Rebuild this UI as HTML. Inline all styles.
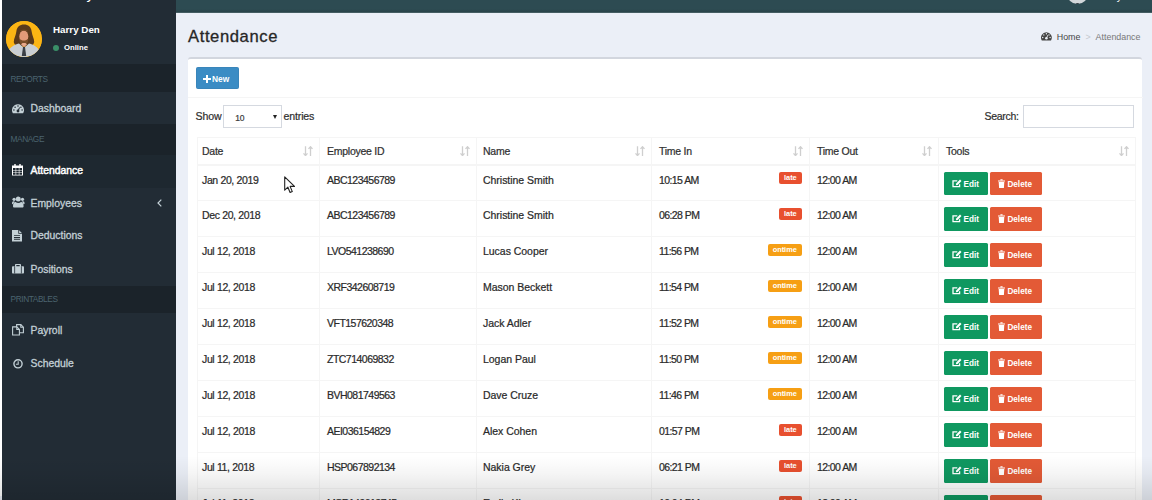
<!DOCTYPE html>
<html lang="en">
<head>
<meta charset="utf-8">
<title>Attendance</title>
<style>
*{box-sizing:border-box;margin:0;padding:0}
html,body{width:1152px;height:500px;overflow:hidden;background:#fff}
body{font-family:"Liberation Sans",sans-serif;font-size:10px;color:#333;position:relative}
#app{position:absolute;left:0;top:0;width:1152px;height:500px;overflow:hidden;background:#ebeff7}
svg{display:block}

/* ---------- sidebar ---------- */
.edge{position:absolute;left:0;top:0;width:2px;height:496px;background:#fff}
.sidebar{position:absolute;left:2px;top:0;width:174px;height:500px;background:#222c35;overflow:hidden}
.logo{position:absolute;left:0;top:-13.6px;width:174px;height:16px;color:#fff;font-size:15px;line-height:16px;text-align:center;white-space:nowrap;padding-right:29px}
.logo b{position:relative;top:-4px}
.user{position:absolute;left:0;top:12px;width:174px;height:52px}
.avatar{position:absolute;left:4px;top:9px;width:36px;height:36px;border-radius:50%;overflow:hidden;background:#fbb117}
.uname{position:absolute;left:51px;top:12px;color:#fff;font-weight:700;font-size:9.8px;line-height:12px;white-space:nowrap}
.ustat{position:absolute;left:51px;top:31px;color:#fff;font-size:7.7px;line-height:10px;white-space:nowrap;font-weight:700}
.ustat i{display:inline-block;width:6px;height:6px;border-radius:50%;background:#3a8f68;margin-right:5px;vertical-align:-.5px}
.menu{position:absolute;left:0;top:0;width:174px;list-style:none}
.menu li{position:absolute;left:0;width:174px;display:block;white-space:nowrap}
.menu li.hd{background:#1b232a;color:#4b646f;font-size:8.3px;letter-spacing:-.4px;padding-left:8.5px}
.menu li.it{color:#c3d0d6;font-size:10.4px;font-weight:400;-webkit-text-stroke:.3px #c3d0d6;padding-left:28.5px}
.menu li.it.on{background:#1e2830;color:#fff;-webkit-text-stroke:.45px #fff}
.menu li.it svg{position:absolute}


/* ---------- top bar ---------- */
.topbar{position:absolute;left:176px;top:0;width:976px;height:13px;background:linear-gradient(#2d4b52 0,#2d4b52 9px,#294349 12px,#5f777b 13px)}

/* ---------- content ---------- */
.title{position:absolute;left:188px;top:25.5px;font-size:16.6px;letter-spacing:.6px;line-height:22px;color:#262626;-webkit-text-stroke:.3px #262626;white-space:nowrap}
.crumb{position:absolute;right:11.5px;top:31px;font-size:8.9px;line-height:12px;white-space:nowrap;color:#777}
.crumb b{font-weight:400;color:#444}
.crumb em{font-style:normal;color:#c5c9cf;padding:0 5px}
.box{position:absolute;left:187.5px;top:57px;width:954.5px;height:460px;background:#fff;border-top:2px solid #d2d6de;border-radius:3px 3px 0 0}

.bhead{position:absolute;left:0;top:0;width:955px;height:38.5px;border-bottom:1px solid #f5f5f5}
.btn{display:inline-block;color:#fff;font-weight:700;white-space:nowrap;border-radius:1.5px;vertical-align:top}
.btn svg{display:inline-block}
.btn.new{position:absolute;left:8px;top:7.5px;width:43.5px;height:22.5px;background:#3b8cc4;border:1px solid #3985ba;font-size:8.4px;line-height:22px;padding-left:6.5px;border-radius:1.5px}
.btn.new svg{vertical-align:-1px;margin-right:1px}
.ctl{position:absolute;left:0;top:38px;width:955px;height:40px}
.len{position:absolute;left:8px;top:8.3px;font-size:10.6px;letter-spacing:-.15px;line-height:22px;color:#2e2e2e;white-space:nowrap;-webkit-text-stroke:.2px #2e2e2e}
.sel{display:inline-block;position:relative;width:58.5px;height:23.5px;border:1px solid #d5d9e0;vertical-align:top;margin:-.8px -1px 0 -1px;font-size:8.5px;line-height:24px;padding-left:11px;color:#444}
.sel i{position:absolute;right:4.2px;top:9.5px;border:2.9px solid transparent;border-top:4.8px solid #222;border-bottom:0}
.flt{position:absolute;right:8.8px;top:7.7px;font-size:10.5px;letter-spacing:-.28px;line-height:22px;color:#2e2e2e;white-space:nowrap;-webkit-text-stroke:.2px #2e2e2e}
.inp{display:inline-block;width:110.5px;height:23.5px;border:1px solid #d5d9e0;vertical-align:top;margin:-.2px 0 0 4.5px;background:#fff}
.tbl{position:absolute;left:9px;top:78px;width:939px;border-collapse:collapse;table-layout:fixed;font-size:10.5px;color:#2a2a2a;-webkit-text-stroke:.22px #2a2a2a}
.tbl .btn,.tbl .lb{-webkit-text-stroke:0}
.tbl th,.tbl td{border:1px solid #f5f5f5;text-align:left;font-weight:400;white-space:nowrap;position:relative;padding:0 0 0 7.5px}
.tbl th{height:27px;border-bottom-width:2px;line-height:24px;color:#333;padding-top:0}
.tbl td{height:36px;line-height:16px;vertical-align:top;padding-top:6px}
.tbl th:nth-child(1),.tbl td:nth-child(1){padding-left:4.5px}
.tbl th:nth-child(3),.tbl td:nth-child(3){padding-left:6.5px}
.tbl th{letter-spacing:-.25px}
.tbl td:nth-child(1){letter-spacing:-.36px}
.tbl td:nth-child(2){letter-spacing:-.52px}
.tbl td:nth-child(3){letter-spacing:-.03px}
.tbl td:nth-child(4),.tbl td:nth-child(5){letter-spacing:-.58px}
.tbl td .lb,.tbl td .btn{letter-spacing:0}
.so{position:absolute;right:6px;top:7.5px}
.lb{position:absolute;right:6.5px;top:6.5px;height:12px;line-height:11.5px;border-radius:2px;color:#fff;font-weight:700;font-size:7.4px;text-align:center}
.lb.late{width:23.3px;background:#e8502f}
.lb.ontime{width:34.5px;background:#f69f14}
.btn.ed,.btn.del{height:23.5px;margin-top:0;font-size:8.2px;line-height:26.5px}
.btn.ed{width:43.8px;background:#0f9860;margin-left:-2px;padding-left:7.5px}
.btn.del{width:51.2px;background:#e35a36;margin-left:2.6px;padding-left:8px}
.btn.ed svg{vertical-align:-1px;margin-right:2px}
.btn.del svg{vertical-align:-1px;margin-right:2px}

.topbar{overflow:hidden}
.tuser{position:absolute;left:0;top:0;width:976px;height:13px}
.tav{position:absolute;left:890.5px;top:-16.6px;width:21px;height:21px;border-radius:50%;background:radial-gradient(circle at 50% 100%,#3b4046 0,#3b4046 1px,#d4d8db 1.5px,#c9ced3 100%)}
.tname{position:absolute;left:921px;top:-9.2px;color:#fff;font-size:10.2px;line-height:12px;white-space:nowrap}
.cursor{position:absolute;left:283.5px;top:176px}
.shade{position:absolute;left:0;top:456px;width:1152px;height:44px;background:linear-gradient(rgba(0,0,0,0),rgba(0,0,0,.04) 40%,rgba(0,0,0,.13));pointer-events:none}
</style>
</head>
<body>
<svg width="0" height="0" style="position:absolute"><defs>
<g id="i-sort"><path d="M2.500 .3v9M.5 7.400l2 2.200 2-2.200M7.500 10V1M5.500 2.900l2-2.200 2 2.200" fill="none" stroke="#cfcfcf" stroke-width="1.300"/></g>
<g id="i-edit"><path d="M7.600 5.200v2.500H1V1.900h4.300" fill="none" stroke="#fff" stroke-width="1.300"/><path d="M3.800 6.300l.4-1.900L8 .6l1.500 1.500L5.700 5.900z" fill="#fff"/></g>
<g id="i-trash"><path d="M0 1.4h7v1H0zM2.4.3h2.2v1H2.4zM.7 2.9h5.6L5.9 9H1.1z" fill="#fff"/></g>
<g id="i-dash"><path d="M6 .2A6 6 0 0 0 .9 9.300h10.200A6 6 0 0 0 6 .2z" fill="currentColor"/><g fill="#222c35"><circle cx="6" cy="2" r=".8"/><circle cx="3.100" cy="3.200" r=".8"/><circle cx="8.900" cy="3.200" r=".8"/><circle cx="1.900" cy="6" r=".8"/><circle cx="10.100" cy="6" r=".8"/><circle cx="6" cy="7" r="1.400"/><path d="M5.500 6.800L7.200 3.300l.8.400L6.500 7.200z"/></g></g>
<g id="i-dash2"><path d="M6 .2A6 6 0 0 0 .9 9.300h10.200A6 6 0 0 0 6 .2z" fill="currentColor"/><g fill="#ecf0f5"><circle cx="6" cy="2" r=".8"/><circle cx="3.100" cy="3.200" r=".8"/><circle cx="8.900" cy="3.200" r=".8"/><circle cx="1.900" cy="6" r=".8"/><circle cx="10.100" cy="6" r=".8"/><circle cx="6" cy="7" r="1.400"/><path d="M5.500 6.800L7.200 3.300l.8.400L6.500 7.200z"/></g></g>
<g id="i-cal"><path d="M2.300 0h1.400v1.400h3.600V0h1.400v1.400H11V11.600H0V1.400h2.300z" fill="currentColor"/><g fill="#1e2830"><path d="M1 3.900h2.600v2H1zM4.200 3.900h2.600v2H4.200zM7.400 3.900H10v2H7.400zM1 6.500h2.600v2H1zM4.200 6.500h2.600v2H4.200zM7.400 6.500H10v2H7.400zM1 9.100h2.600v1.700H1zM4.200 9.100h2.600v1.700H4.200zM7.400 9.100H10v1.700H7.400z"/></g></g>
<g id="i-users" fill="currentColor"><circle cx="6.300" cy="3" r="2.500"/><path d="M2.300 11.600c-.8 0-1.300-.5-1.300-1.300C1 7.600 2 5.900 3.600 5.900c.7.600 1.600 1 2.700 1s2-.4 2.700-1c1.600 0 2.600 1.700 2.600 4.400 0 .8-.5 1.300-1.300 1.300z"/><circle cx="2.100" cy="3.300" r="1.600"/><circle cx="10.500" cy="3.300" r="1.600"/><path d="M0 7.500C0 6 .6 5.200 1.500 5.200c.4.300.9.500 1.400.5-.9.600-1.500 1.400-1.700 2.600H.8C.3 8.300 0 8 0 7.500zM12.600 7.500c0-1.500-.6-2.300-1.500-2.300-.4.300-.9.500-1.400.5.900.6 1.500 1.400 1.700 2.600h.4c.5 0 .8-.3.8-.8z"/></g>
<g id="i-file"><path d="M0 0h6.300v3.700H10v7.900H0z" fill="currentColor"/><path d="M7.100.2L9.800 2.900H7.100z" fill="currentColor"/><path d="M2 5.200h6v.9H2zM2 7h6v.9H2zM2 8.800h6v.9H2z" fill="#222c35"/></g>
<g id="i-case"><path d="M3.800 0h4.400c.5 0 .8.300.8.800v1.500h2c.6 0 1 .4 1 1v5.300c0 .6-.4 1-1 1H1c-.6 0-1-.4-1-1V3.300c0-.6.400-1 1-1h2V.8c0-.5.300-.8.800-.8zM4.300 1.100v1.200h3.400V1.100z" fill="currentColor" fill-rule="evenodd"/><path d="M2.300 2.300h.8v7.300h-.8zM8.900 2.300h.8v7.300h-.8z" fill="#222c35"/></g>
<g id="i-files" fill="none" stroke="currentColor" stroke-width="1.100"><path d="M4.600 2.900V.6h4.200l2.600 2.600v5.500H7.600"/><path d="M.6 2.900h4.200l2.600 2.600V11H.6z"/><path d="M4.800 2.900v2.600h2.600M8.800.6v2.600h2.600"/></g>
<g id="i-clock"><circle cx="5" cy="4.800" r="4.100" fill="none" stroke="currentColor" stroke-width="1.400"/><path d="M5.200 2.300v2.900H2.900" fill="none" stroke="currentColor" stroke-width="1.100"/></g>
</defs></svg>
<div id="app">
  <div class="edge"></div>
  <aside class="sidebar">
    <div class="logo"><b>Payroll</b> System</div>
    <div class="user">
      <div class="avatar"><svg width="36" height="36" viewBox="0 0 36 36"><circle cx="18" cy="18" r="18" fill="#fcb514"/><path d="M18 3.5c-4.2 0-7.2 2.6-7.6 6.8-.5 4.500-2.600 7.200-2.600 10.500 0 3.200 3.300 4.700 10.200 4.700s10.200-1.500 10.200-4.700c0-3.300-2.100-6-2.600-10.500C25.200 6.100 22.200 3.500 18 3.500z" fill="#5a3a1c"/><ellipse cx="17.800" cy="15.500" rx="4.500" ry="6" fill="#e39a78"/><path d="M13.300 17.500c0 4 2 6.800 4.500 6.800s4.500-2.800 4.500-6.800c-1.400 1.600-2.800 2-4.500 2s-3.100-.4-4.500-2z" fill="#7a4f2a"/><path d="M13.500 10.500c1.200-2.200 7.400-2.200 8.600 0-1.200-1-7.400-1-8.600 0z" fill="#7a4f2a"/><path d="M2.500 29.500c3-4.500 7.500-6.500 10.500-7l5 4.500 5-4.500c3 .5 7.500 2.500 10.500 7C30.500 33.500 24.500 36 18 36S5.500 33.500 2.500 29.500z" fill="#c9ced3"/><path d="M15 23.500l3 2.500 3-2.500-1.500-1.500h-3z" fill="#e8a88a"/><path d="M17 26h2l1.200 9h-4.400z" fill="#3b4046"/></svg></div>
      <div class="uname">Harry Den</div>
      <div class="ustat"><i></i>Online</div>
    </div>
    <ul class="menu">
      <li class="hd" style="top:64px;height:28px;line-height:30px">REPORTS</li>
      <li class="it" style="top:92px;height:32.4px;line-height:33.4px"><svg width="12" height="9.5" viewBox="0 0 12 9.5" style="left:10.4px;top:12.20px"><use href="#i-dash"/></svg>Dashboard</li>
      <li class="hd" style="top:124.4px;height:30.6px;line-height:30.2px">MANAGE</li>
      <li class="it on" style="top:155px;height:32.65px;line-height:31px"><svg width="11" height="11.6" viewBox="0 0 11 11.6" style="left:10.4px;top:9.00px"><use href="#i-cal"/></svg>Attendance</li>
      <li class="it" style="top:187.65px;height:32.65px;line-height:31.3px"><svg width="12.6" height="11.6" viewBox="0 0 12.6 11.6" style="left:10.4px;top:8.75px"><use href="#i-users"/></svg>Employees<svg class="chev" width="5" height="8" viewBox="0 0 5 8" style="left:154.8px;top:11.4px"><path d="M4.300 .6L1 4l3.300 3.400" fill="none" stroke="#c3d0d6" stroke-width="1.200"/></svg></li>
      <li class="it" style="top:220.3px;height:32.65px;line-height:32px"><svg width="10" height="11.6" viewBox="0 0 10 11.6" style="left:10.4px;top:9.70px"><use href="#i-file"/></svg>Deductions</li>
      <li class="it" style="top:252.95px;height:32.65px;line-height:33.1px"><svg width="12" height="9.6" viewBox="0 0 12 9.6" style="left:10.4px;top:11.45px"><use href="#i-case"/></svg>Positions</li>
      <li class="hd" style="top:285.6px;height:27.4px;line-height:27.8px">PRINTABLES</li>
      <li class="it" style="top:313px;height:33px;line-height:35px"><svg width="12" height="11.6" viewBox="0 0 12 11.6" style="left:10.4px;top:11.40px"><use href="#i-files"/></svg>Payroll</li>
      <li class="it" style="top:346px;height:33px;line-height:36.2px"><svg width="10" height="9.6" viewBox="0 0 10 9.6" style="left:10.8px;top:13.00px"><use href="#i-clock"/></svg>Schedule</li>
    </ul>
  </aside>
  <div class="topbar"><div class="tuser"><span class="tav"></span><span class="tname">Harry Den</span></div></div>
  <h1 class="title" style="font-weight:400">Attendance</h1>
  <div class="crumb"><svg width="10.8" height="8.6" viewBox="0 0 12 9.5" style="display:inline-block;color:#444;vertical-align:-1px;margin-right:5px"><use href="#i-dash2"/></svg><b>Home</b><em>&gt;</em>Attendance</div>
  <section class="box">
    <div class="bhead"><a class="btn new"><svg width="8" height="8" viewBox="0 0 8 8"><path d="M3 0h2v3h3v2H5v3H3V5H0V3h3z" fill="#fff"/></svg>New</a></div>
    <div class="ctl">
      <label class="len">Show <span class="sel">10<i></i></span> entries</label>
      <label class="flt">Search:<span class="inp"></span></label>
    </div>
    <table class="tbl">
      <colgroup><col style="width:122px"><col style="width:157px"><col style="width:175px"><col style="width:158px"><col style="width:129px"><col style="width:197px"></colgroup>
      <thead><tr>
        <th>Date<svg class="so" width="10" height="10" viewBox="0 0 10 10"><use href="#i-sort"/></svg></th>
        <th>Employee ID<svg class="so" width="10" height="10" viewBox="0 0 10 10"><use href="#i-sort"/></svg></th>
        <th>Name<svg class="so" width="10" height="10" viewBox="0 0 10 10"><use href="#i-sort"/></svg></th>
        <th>Time In<svg class="so" width="10" height="10" viewBox="0 0 10 10"><use href="#i-sort"/></svg></th>
        <th>Time Out<svg class="so" width="10" height="10" viewBox="0 0 10 10"><use href="#i-sort"/></svg></th>
        <th>Tools<svg class="so" width="10" height="10" viewBox="0 0 10 10"><use href="#i-sort"/></svg></th>
      </tr></thead>
      <tbody>
        <tr><td>Jan 20, 2019</td><td>ABC123456789</td><td>Christine Smith</td><td>10:15 AM<span class="lb late">late</span></td><td>12:00 AM</td><td><a class="btn ed"><svg width="10" height="9" viewBox="0 0 10 9"><use href="#i-edit"/></svg>Edit</a><a class="btn del"><svg width="7" height="9" viewBox="0 0 7 9"><use href="#i-trash"/></svg>Delete</a></td></tr>
        <tr><td>Dec 20, 2018</td><td>ABC123456789</td><td>Christine Smith</td><td>06:28 PM<span class="lb late">late</span></td><td>12:00 AM</td><td><a class="btn ed"><svg width="10" height="9" viewBox="0 0 10 9"><use href="#i-edit"/></svg>Edit</a><a class="btn del"><svg width="7" height="9" viewBox="0 0 7 9"><use href="#i-trash"/></svg>Delete</a></td></tr>
        <tr><td>Jul 12, 2018</td><td>LVO541238690</td><td>Lucas Cooper</td><td>11:56 PM<span class="lb ontime">ontime</span></td><td>12:00 AM</td><td><a class="btn ed"><svg width="10" height="9" viewBox="0 0 10 9"><use href="#i-edit"/></svg>Edit</a><a class="btn del"><svg width="7" height="9" viewBox="0 0 7 9"><use href="#i-trash"/></svg>Delete</a></td></tr>
        <tr><td>Jul 12, 2018</td><td>XRF342608719</td><td>Mason Beckett</td><td>11:54 PM<span class="lb ontime">ontime</span></td><td>12:00 AM</td><td><a class="btn ed"><svg width="10" height="9" viewBox="0 0 10 9"><use href="#i-edit"/></svg>Edit</a><a class="btn del"><svg width="7" height="9" viewBox="0 0 7 9"><use href="#i-trash"/></svg>Delete</a></td></tr>
        <tr><td>Jul 12, 2018</td><td>VFT157620348</td><td>Jack Adler</td><td>11:52 PM<span class="lb ontime">ontime</span></td><td>12:00 AM</td><td><a class="btn ed"><svg width="10" height="9" viewBox="0 0 10 9"><use href="#i-edit"/></svg>Edit</a><a class="btn del"><svg width="7" height="9" viewBox="0 0 7 9"><use href="#i-trash"/></svg>Delete</a></td></tr>
        <tr><td>Jul 12, 2018</td><td>ZTC714069832</td><td>Logan Paul</td><td>11:50 PM<span class="lb ontime">ontime</span></td><td>12:00 AM</td><td><a class="btn ed"><svg width="10" height="9" viewBox="0 0 10 9"><use href="#i-edit"/></svg>Edit</a><a class="btn del"><svg width="7" height="9" viewBox="0 0 7 9"><use href="#i-trash"/></svg>Delete</a></td></tr>
        <tr><td>Jul 12, 2018</td><td>BVH081749563</td><td>Dave Cruze</td><td>11:46 PM<span class="lb ontime">ontime</span></td><td>12:00 AM</td><td><a class="btn ed"><svg width="10" height="9" viewBox="0 0 10 9"><use href="#i-edit"/></svg>Edit</a><a class="btn del"><svg width="7" height="9" viewBox="0 0 7 9"><use href="#i-trash"/></svg>Delete</a></td></tr>
        <tr><td>Jul 12, 2018</td><td>AEI036154829</td><td>Alex Cohen</td><td>01:57 PM<span class="lb late">late</span></td><td>12:00 AM</td><td><a class="btn ed"><svg width="10" height="9" viewBox="0 0 10 9"><use href="#i-edit"/></svg>Edit</a><a class="btn del"><svg width="7" height="9" viewBox="0 0 7 9"><use href="#i-trash"/></svg>Delete</a></td></tr>
        <tr><td>Jul 11, 2018</td><td>HSP067892134</td><td>Nakia Grey</td><td>06:21 PM<span class="lb late">late</span></td><td>12:00 AM</td><td><a class="btn ed"><svg width="10" height="9" viewBox="0 0 10 9"><use href="#i-edit"/></svg>Edit</a><a class="btn del"><svg width="7" height="9" viewBox="0 0 7 9"><use href="#i-trash"/></svg>Delete</a></td></tr>
        <tr><td>Jul 11, 2018</td><td>MSR149613745</td><td>Emily Kim</td><td>10:04 PM<span class="lb late">late</span></td><td>12:00 AM</td><td><a class="btn ed"><svg width="10" height="9" viewBox="0 0 10 9"><use href="#i-edit"/></svg>Edit</a><a class="btn del"><svg width="7" height="9" viewBox="0 0 7 9"><use href="#i-trash"/></svg>Delete</a></td></tr>
      </tbody>
    </table>
  </section>
  <svg class="cursor" width="12" height="18" viewBox="0 0 12 18"><path d="M.7.800V14.200L3.900 11.200 6.100 16.500 8.300 15.600 6.100 10.400H10.500z" fill="#fff" stroke="#222" stroke-width="1.100" stroke-linejoin="round"/></svg>
  <div class="shade"></div>
</div>
</body>
</html>
